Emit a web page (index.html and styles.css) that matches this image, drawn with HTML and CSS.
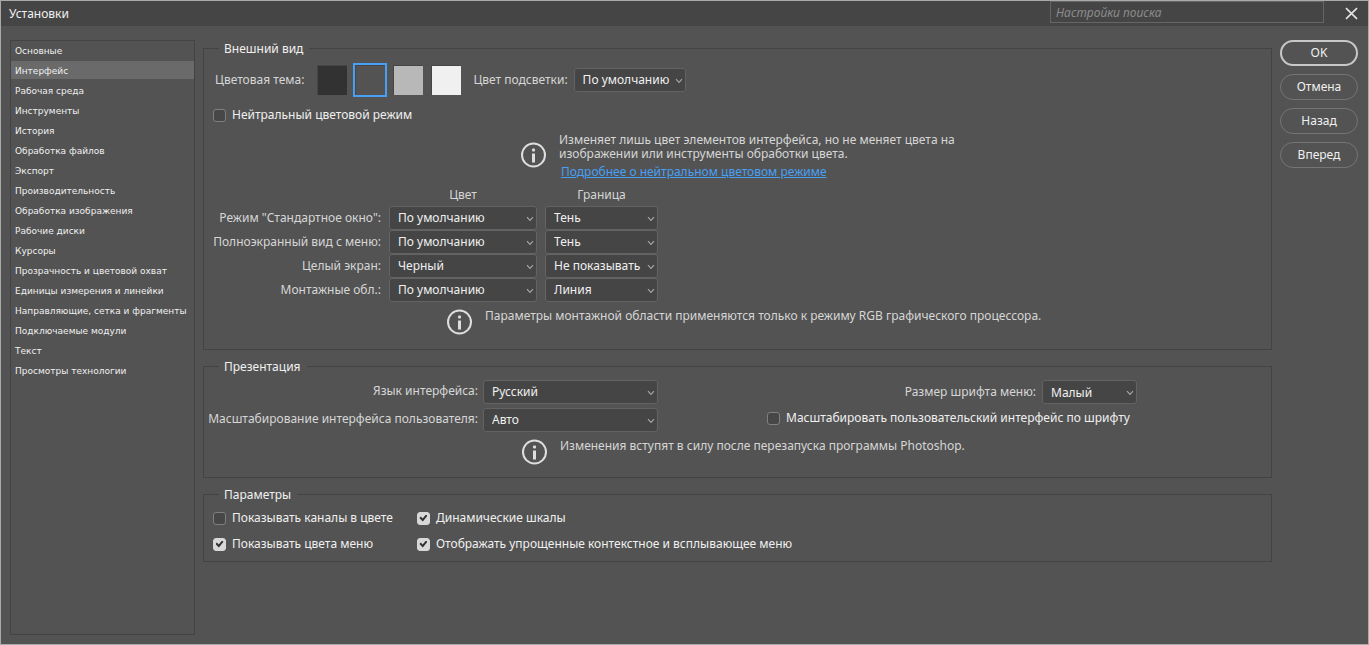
FILE: index.html
```html
<!DOCTYPE html>
<html lang="ru">
<head>
<meta charset="utf-8">
<title>Установки</title>
<link rel="stylesheet" href="styles.css">
</head>
<body>
<svg class="defs" aria-hidden="true">
  <symbol id="chevron" viewBox="0 0 8 6"><path d="M1 1.2L4 4.3L7 1.2" fill="none" stroke="#a6a6a6" stroke-width="1.2"/></symbol>
  <symbol id="info" viewBox="0 0 26 26"><circle cx="12.5" cy="13" r="11.5" fill="none" stroke="#dedede" stroke-width="2"/><rect x="11" y="6.5" width="3" height="3" rx="1" fill="#dedede"/><rect x="11" y="11.5" width="3" height="9" fill="#dedede"/></symbol>
</svg>
<div class="dialog">
  <header class="titlebar">
    <h1 class="title">Установки</h1>
    <input class="search" type="search" placeholder="Настройки поиска" aria-label="Настройки поиска">
    <button class="close" type="button" aria-label="Закрыть"><svg width="13" height="13" viewBox="0 0 13 13"><path d="M1 1.2L12 11.8M12 1.2L1 11.8" stroke="#e4e4e4" stroke-width="1.6"/></svg></button>
  </header>
  <div class="body">
    <nav class="sidebar">
      <a class="item" href="#">Основные</a>
      <a class="item current" href="#" aria-current="page">Интерфейс</a>
      <a class="item" href="#">Рабочая среда</a>
      <a class="item" href="#">Инструменты</a>
      <a class="item" href="#">История</a>
      <a class="item" href="#">Обработка файлов</a>
      <a class="item" href="#">Экспорт</a>
      <a class="item" href="#">Производительность</a>
      <a class="item" href="#">Обработка изображения</a>
      <a class="item" href="#">Рабочие диски</a>
      <a class="item" href="#">Курсоры</a>
      <a class="item" href="#">Прозрачность и цветовой охват</a>
      <a class="item" href="#">Единицы измерения и линейки</a>
      <a class="item" href="#">Направляющие, сетка и фрагменты</a>
      <a class="item" href="#">Подключаемые модули</a>
      <a class="item" href="#">Текст</a>
      <a class="item" href="#">Просмотры технологии</a>
    </nav>

    <main class="panels">
      <fieldset class="group appearance">
        <legend>Внешний вид</legend>
        <div class="theme-row">
          <span class="label">Цветовая тема:</span>
          <div class="swatches">
            <button class="swatch black" type="button" aria-label="Черная"></button>
            <button class="swatch dark selected" type="button" aria-label="Темная" aria-pressed="true"></button>
            <button class="swatch medium" type="button" aria-label="Средняя"></button>
            <button class="swatch light" type="button" aria-label="Светлая"></button>
          </div>
          <label class="label" for="highlight">Цвет подсветки:</label>
          <span class="select"><select id="highlight"><option>По умолчанию</option></select><svg class="chevron"><use href="#chevron"/></svg></span>
        </div>
        <label class="check"><input type="checkbox">Нейтральный цветовой режим</label>
        <div class="note neutral">
          <svg class="info"><use href="#info"/></svg>
          <div>
            <p>Изменяет лишь цвет элементов интерфейса, но не меняет цвета на<br>изображении или инструменты обработки цвета.</p>
            <a class="more" href="#">Подробнее о нейтральном цветовом режиме</a>
          </div>
        </div>
        <div class="modes">
          <span></span><span class="head" id="color">Цвет</span><span class="head" id="edge">Граница</span>
          <label for="m1">Режим "Стандартное окно":</label>
          <span class="select"><select id="m1"><option>По умолчанию</option></select><svg class="chevron"><use href="#chevron"/></svg></span>
          <span class="select"><select aria-labelledby="edge"><option>Тень</option></select><svg class="chevron"><use href="#chevron"/></svg></span>
          <label for="m2">Полноэкранный вид с меню:</label>
          <span class="select"><select id="m2"><option>По умолчанию</option></select><svg class="chevron"><use href="#chevron"/></svg></span>
          <span class="select"><select aria-labelledby="edge"><option>Тень</option></select><svg class="chevron"><use href="#chevron"/></svg></span>
          <label for="m3">Целый экран:</label>
          <span class="select"><select id="m3"><option>Черный</option></select><svg class="chevron"><use href="#chevron"/></svg></span>
          <span class="select"><select aria-labelledby="edge"><option>Не показывать</option></select><svg class="chevron"><use href="#chevron"/></svg></span>
          <label for="m4">Монтажные обл.:</label>
          <span class="select"><select id="m4"><option>По умолчанию</option></select><svg class="chevron"><use href="#chevron"/></svg></span>
          <span class="select"><select aria-labelledby="edge"><option>Линия</option></select><svg class="chevron"><use href="#chevron"/></svg></span>
        </div>
        <div class="note artboard">
          <svg class="info"><use href="#info"/></svg>
          <p>Параметры монтажной области применяются только к режиму RGB графического процессора.</p>
        </div>
      </fieldset>

      <fieldset class="group presentation">
        <legend>Презентация</legend>
        <div class="present-cols">
          <div class="present-form">
            <label for="lang">Язык интерфейса:</label>
            <span class="select"><select id="lang"><option>Русский</option></select><svg class="chevron"><use href="#chevron"/></svg></span>
            <label for="scale">Масштабирование интерфейса пользователя:</label>
            <span class="select"><select id="scale"><option>Авто</option></select><svg class="chevron"><use href="#chevron"/></svg></span>
          </div>
          <div class="font-form">
            <div class="font-size">
              <label for="font">Размер шрифта меню:</label>
              <span class="select"><select id="font"><option>Малый</option></select><svg class="chevron"><use href="#chevron"/></svg></span>
            </div>
            <label class="check"><input type="checkbox">Масштабировать пользовательский интерфейс по шрифту</label>
          </div>
        </div>
        <div class="note restart">
          <svg class="info"><use href="#info"/></svg>
          <p>Изменения вступят в силу после перезапуска программы Photoshop.</p>
        </div>
      </fieldset>

      <fieldset class="group">
        <legend>Параметры</legend>
        <div class="options">
          <label class="check"><input type="checkbox">Показывать каналы в цвете</label>
          <label class="check"><input type="checkbox" checked>Динамические шкалы</label>
          <label class="check"><input type="checkbox" checked>Показывать цвета меню</label>
          <label class="check"><input type="checkbox" checked>Отображать упрощенные контекстное и всплывающее меню</label>
        </div>
      </fieldset>
    </main>

    <div class="actions">
      <button class="action primary" type="button">OK</button>
      <button class="action" type="button">Отмена</button>
      <button class="action" type="button">Назад</button>
      <button class="action" type="button">Вперед</button>
    </div>
  </div>
</div>
</body>
</html>
```
FILE: styles.css
```css
* { box-sizing: border-box; }

body {
  margin: 0;
  background: #535353;
  color: #d6d6d6;
  font: 12px/16px "Noto Sans", "Open Sans", sans-serif;
}

p { margin: 0; }
.defs { display: none; }

input, select, button {
  font: inherit;
  color: #f0f0f0;
}

.dialog {
  display: flex;
  flex-direction: column;
  min-height: 100vh;
  border: 1px solid #a9a9a9;
}

/* Title bar */
.titlebar {
  display: flex;
  align-items: center;
  height: 25px;
  padding: 0 10px 0 8px;
  background: #454545;
}

.title {
  flex: 1;
  margin: 0;
  font-size: 12px;
  font-weight: 400;
  color: #f0f0f0;
}

.search {
  align-self: flex-start;
  appearance: none;
  width: 274px;
  height: 22px;
  margin-right: 21px;
  padding: 0 5px;
  border: 1px solid #666;
  background: #454545;
  outline: none;
}

.search::placeholder {
  color: #8c8c8c;
  font-style: italic;
  opacity: 1;
}

.close {
  display: flex;
  padding: 0;
  border: 0;
  background: none;
}

/* Layout */
.body {
  flex: 1;
  display: grid;
  grid-template-columns: 185px 1fr 78px;
  column-gap: 8px;
  padding: 14px 10px 9px 9px;
}

.sidebar {
  display: flex;
  flex-direction: column;
  gap: 2px;
  border: 1px solid #434343;
}

.item {
  height: 18px;
  padding-left: 4px;
  color: #f0f0f0;
  font: 9px/20px "DejaVu Sans", sans-serif;
  text-decoration: none;
  white-space: nowrap;
}

.current { background: #6a6a6a; }

.panels {
  display: flex;
  flex-direction: column;
  gap: 8px;
  min-width: 0;
}

.group {
  min-width: 0;
  margin: 0;
  padding: 0 9px;
  border: 1px solid #434343;
}

legend {
  margin-left: 6px;
  padding: 0 6px 0 5px;
  line-height: 17px;
  color: #f0f0f0;
}

/* Controls */
.select {
  position: relative;
  display: block;
}

.select select {
  display: block;
  appearance: none;
  width: 100%;
  height: 24px;
  padding: 0 8px;
  border: 1px solid #636363;
  border-radius: 3px;
  background: #454545;
}

.chevron {
  position: absolute;
  right: 3px;
  top: 10px;
  width: 8px;
  height: 6px;
  pointer-events: none;
}

.check {
  display: flex;
  align-items: center;
  gap: 6px;
  color: #f0f0f0;
}

.check input {
  appearance: none;
  display: grid;
  place-items: center;
  width: 13px;
  height: 13px;
  margin: 0;
  border: 1px solid #808080;
  border-radius: 3px;
  background: #474747;
}

.check input:checked {
  border-color: #d8d8d8;
  background: #d8d8d8;
}

.check input:checked::after {
  content: "";
  width: 8px;
  height: 7px;
  background: #303030;
  clip-path: polygon(0 50%, 18% 30%, 40% 56%, 82% 0, 100% 18%, 42% 100%);
}

.note {
  display: flex;
  gap: 12px;
}

.note p { line-height: 14px; }

.info {
  flex: none;
  width: 26px;
  height: 26px;
}

/* Appearance group */
.appearance { padding-bottom: 14px; }

.theme-row {
  display: flex;
  align-items: center;
  gap: 6px;
  height: 34px;
  margin-top: 6px;
  padding-left: 2px;
}

.swatches {
  display: flex;
  gap: 8px;
  margin: 0 6px 0 7px;
}

.swatch {
  width: 30px;
  height: 30px;
  padding: 0;
  border: 1px solid #454545;
  border-right: 0;
  border-bottom: 0;
}

.black { background: #323232; }
.dark { background: #535353; }
.medium { background: #b8b8b8; }
.light { background: #f0f0f0; }
.selected { outline: 2px solid #46a0f5; }
.theme-row .select { width: 112px; }
.appearance .check { margin-top: 10px; }

.neutral { margin: 10px 0 0 308px; }
.neutral .info { margin-top: 9px; }

.more {
  display: block;
  margin-top: 3px;
  padding-left: 2px;
  color: #46a0f5;
}

.modes {
  display: grid;
  grid-template-columns: 168px 148px 113px;
  gap: 0 8px;
  margin-top: 6px;
}

.modes label { text-align: right; line-height: 24px; }

.head {
  padding-bottom: 2px;
  text-align: center;
  line-height: 18px;
}

.artboard { margin: 7px 0 0 234px; }

/* Presentation group */
.presentation { padding: 0 9px 12px 4px; }
.presentation legend { margin-left: 11px; }

.present-cols {
  display: flex;
  gap: 109px;
  margin-top: 5px;
}

.present-form {
  display: grid;
  grid-template-columns: 270px 175px;
  gap: 4px 5px;
}

.present-form label {
  text-align: right;
  white-space: nowrap;
  line-height: 22px;
}

.font-form { width: 370px; }

.font-size {
  display: flex;
  justify-content: flex-end;
  gap: 6px;
  line-height: 24px;
}

.font-size .select { width: 95px; }
.font-form .check { margin-top: 6px; white-space: nowrap; }
.restart { margin: 7px 0 0 314px; }

/* Options group */
.options {
  display: grid;
  grid-template-columns: max-content max-content;
  gap: 10px 24px;
  padding: 7px 0 9px;
}

/* Dialog buttons */
.actions {
  display: flex;
  flex-direction: column;
  gap: 8px;
}

.action {
  height: 26px;
  padding: 0;
  border: 1px solid #757575;
  border-radius: 13px;
  background: transparent;
}

.primary { border: 2px solid #c8c8c8; }
```
